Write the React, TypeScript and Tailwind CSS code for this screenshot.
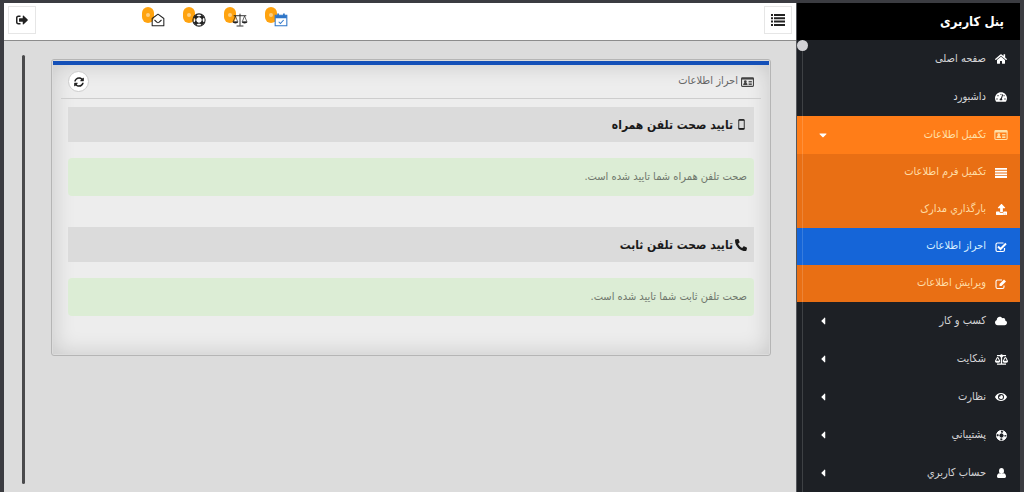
import type { ReactNode } from "react";
import {
  FaBalanceScale,
  FaCaretDown,
  FaCaretLeft,
  FaCloud,
  FaEye,
  FaHome,
  FaPhone,
  FaSignOutAlt,
  FaSyncAlt,
  FaTachometerAlt,
  FaUpload,
} from "react-icons/fa";

type IconProps = { className?: string };

function IdCardIcon({ className }: IconProps) {
  return (
    <svg viewBox="0 0 24 18" className={className} fill="none" stroke="currentColor" aria-hidden="true">
      <rect x="1" y="1" width="22" height="16" rx="1.5" strokeWidth="2" />
      <path d="M1 3h22" strokeWidth="3" />
      <path d="M14 8h6M14 11h6M14 13.5h6" strokeWidth="1.8" />
      <circle cx="8" cy="8.5" r="2.6" fill="currentColor" stroke="none" />
      <path d="M4 14.5c0-3 1.5-4 4-4s4 1 4 4z" fill="currentColor" stroke="none" />
    </svg>
  );
}

function LinesIcon({ className }: IconProps) {
  return (
    <svg viewBox="0 0 12 10" className={className} fill="currentColor" aria-hidden="true">
      <path d="M0 0h12v1.8H0zM0 2.7h12v1.8H0zM0 5.4h12v1.8H0zM0 8.1h12v1.8H0z" />
    </svg>
  );
}

function ListIcon({ className }: IconProps) {
  return (
    <svg viewBox="0 0 14 12" className={className} fill="currentColor" aria-hidden="true">
      <path d="M0 0h2v2H0zM0 3.3h2v2H0zM0 6.6h2v2H0zM0 10h2v2H0z" />
      <path d="M3 0h11v2H3zM3 3.3h11v2H3zM3 6.6h11v2H3zM3 10h11v2H3z" />
    </svg>
  );
}

function MobileIcon({ className }: IconProps) {
  return (
    <svg viewBox="0 0 12 20" className={className} fill="none" stroke="currentColor" aria-hidden="true">
      <rect x="1" y="1" width="10" height="18" rx="1" strokeWidth="1.6" />
      <path d="M1 2.2h10M1 17.5h10" strokeWidth="2.2" />
    </svg>
  );
}

function CheckBoxIcon({ className }: IconProps) {
  return (
    <svg viewBox="0 0 24 24" className={className} fill="none" stroke="currentColor" aria-hidden="true">
      <path d="M19 14v4a3 3 0 0 1-3 3H5a3 3 0 0 1-3-3V7a3 3 0 0 1 3-3h12" strokeWidth="2.4" />
      <path d="m6 11 5 5L22 5" strokeWidth="4" />
    </svg>
  );
}

function EditIcon({ className }: IconProps) {
  return (
    <svg viewBox="0 0 24 24" className={className} fill="none" stroke="currentColor" aria-hidden="true">
      <path d="M18 15v3a3 3 0 0 1-3 3H5a3 3 0 0 1-3-3V7a3 3 0 0 1 3-3h9" strokeWidth="2.2" />
      <path d="M9 12 18 3l4 4-9 9H9z" fill="currentColor" stroke="none" />
    </svg>
  );
}

function RingIcon({ className }: IconProps) {
  return (
    <svg viewBox="0 0 24 24" className={className} fill="none" stroke="currentColor" aria-hidden="true">
      <circle cx="12" cy="12" r="11" strokeWidth="1.8" />
      <circle cx="12" cy="12" r="5.5" strokeWidth="1.8" />
      <circle cx="12" cy="12" r="8.4" strokeWidth="6" strokeDasharray="8.6 4.6" strokeDashoffset="-2.3" />
    </svg>
  );
}

function UserIcon({ className }: IconProps) {
  return (
    <svg viewBox="0 0 20 22" className={className} fill="currentColor" aria-hidden="true">
      <ellipse cx="10" cy="6.5" rx="5.5" ry="6.5" />
      <path d="M5.5 11.5C2 12 0 15 0 19c0 2 1 3 3 3h14c2 0 3-1 3-3 0-4-2-7-5.500-7.500-2.500 2.500-6.500 2.500-9 0z" />
    </svg>
  );
}

function MailIcon({ className }: IconProps) {
  return (
    <svg viewBox="0 0 24 24" className={className} fill="none" stroke="currentColor" strokeWidth="1.8" strokeLinejoin="round" aria-hidden="true">
      <path d="M2 9.500 12 2l10 7.500V22H2z" />
      <path d="m6 12 4.500 4.200c1 .8 2 .8 3 0L18 12" />
    </svg>
  );
}

function SupportIcon({ className }: IconProps) {
  return (
    <svg viewBox="0 0 24 24" className={className} fill="none" stroke="currentColor" aria-hidden="true">
      <circle cx="12" cy="12" r="10.500" strokeWidth="1.8" />
      <circle cx="12" cy="12" r="5.500" strokeWidth="1.8" />
      <path d="m5 5 3.500 3.500M19 5l-3.500 3.500M5 19l3.500-3.500M19 19l-3.500-3.500" strokeWidth="6" />
    </svg>
  );
}

function ScalesIcon({ className }: IconProps) {
  return (
    <svg viewBox="0 0 28 24" className={className} fill="none" stroke="currentColor" strokeWidth="1.6" aria-hidden="true">
      <path d="M14 1v21M8 22.500h12M3 4.500h22" />
      <path d="M6 5 2 15h8zM22 5l-4 10h8z" strokeWidth="1.2" />
      <path d="M1 15h10c-.5 4-9.500 4-10 0zM17 15h10c-.5 4-9.500 4-10 0z" fill="currentColor" stroke="none" />
    </svg>
  );
}

function CalendarIcon({ className }: IconProps) {
  return (
    <svg viewBox="0 0 24 24" className={className} fill="none" stroke="currentColor" strokeWidth="1.8" aria-hidden="true">
      <path d="M2 4h20v18H2z" fill="white" />
      <path d="M2 6.500h20" strokeWidth="5" />
      <path d="M7 1v5M17 1v5" strokeWidth="3" />
      <path d="m8 15 3 3 5.500-6" />
    </svg>
  );
}

type MenuItem = {
  label: string;
  icon: ReactNode;
};

const topItems: MenuItem[] = [
  { label: "صفحه اصلی", icon: <FaHome className="size-3" /> },
  { label: "داشبورد", icon: <FaTachometerAlt className="size-3" /> },
];

const subItems: (MenuItem & { active?: boolean })[] = [
  { label: "تکمیل فرم اطلاعات", icon: <LinesIcon className="h-[10px] w-3" /> },
  { label: "بارگذاري مدارک", icon: <FaUpload className="size-[11px]" /> },
  { label: "احراز اطلاعات", icon: <CheckBoxIcon className="size-3" />, active: true },
  { label: "ویرایش اطلاعات", icon: <EditIcon className="size-3" /> },
];

const bottomItems: MenuItem[] = [
  { label: "کسب و کار", icon: <FaCloud className="size-3" /> },
  { label: "شکایت", icon: <FaBalanceScale className="size-[13px]" /> },
  { label: "نظارت", icon: <FaEye className="size-3" /> },
  { label: "پشتیباني", icon: <RingIcon className="size-[11px]" /> },
  { label: "حساب کاربري", icon: <UserIcon className="h-[10px] w-[9px]" /> },
];

const shortcuts = [
  { label: "تقویم", icon: <CalendarIcon className="size-[14px] text-[#2f76c8]" /> },
  { label: "شکایت", icon: <ScalesIcon className="h-[14px] w-4" /> },
  { label: "پشتیبانی", icon: <SupportIcon className="size-[14px]" /> },
  { label: "پیام ها", icon: <MailIcon className="size-[14px]" /> },
];

function MenuIcon({ children }: { children: ReactNode }) {
  return <span className="flex w-[14px] shrink-0 justify-center text-white">{children}</span>;
}

function Sidebar() {
  return (
    <aside className="relative w-56 shrink-0 border-l border-[#55575c] bg-[#1d2025]">
      <div className="flex h-[37px] items-center bg-black px-4">
        <h1 className="text-[13px] font-bold text-white">پنل کاربری</h1>
      </div>
      <nav>
        <ul>
          {topItems.map((item) => (
            <li key={item.label}>
              <a href="#" className="flex h-[38px] items-center gap-2 px-3 text-[11px] text-[#d6d6d8]">
                <MenuIcon>{item.icon}</MenuIcon>
                <span>{item.label}</span>
              </a>
            </li>
          ))}
          <li>
            <a href="#" className="flex h-[38px] items-center gap-2 bg-[#ff7d18] pr-3 pl-5 text-[11px] text-[#ffe0a8]">
              <IdCardIcon className="h-[10px] w-[14px] shrink-0" />
              <span className="flex-1">تکمیل اطلاعات</span>
              <FaCaretDown className="size-3 text-white" />
            </a>
            <ul className="bg-[#e96f14]">
              {subItems.map((item) => (
                <li key={item.label}>
                  <a
                    href="#"
                    className={
                      item.active
                        ? "flex h-[37px] items-center gap-2 bg-[#1565d8] px-3 text-[11px] text-[#d8f0ff]"
                        : "flex h-[37px] items-center gap-2 px-3 text-[11px] text-[#ffdda6]"
                    }
                  >
                    <MenuIcon>{item.icon}</MenuIcon>
                    <span>{item.label}</span>
                  </a>
                </li>
              ))}
            </ul>
          </li>
          {bottomItems.map((item) => (
            <li key={item.label}>
              <a href="#" className="flex h-[38px] items-center gap-2 pr-3 pl-5 text-[11px] text-[#d6d6d8]">
                <MenuIcon>{item.icon}</MenuIcon>
                <span className="flex-1">{item.label}</span>
                <FaCaretLeft className="size-3 text-white" />
              </a>
            </li>
          ))}
        </ul>
      </nav>
      {/* scroll rail over the menu */}
      <div className="absolute top-[37px] bottom-0 left-[5px] w-px bg-white/15" />
      <div className="absolute top-[37px] left-0 size-[11px] rounded-full bg-[#d2d2d6]" />
    </aside>
  );
}

function Topbar() {
  return (
    <header className="flex h-[38px] items-center border-b border-[#8c8c8c] bg-white px-1 pb-1 text-[#222]">
      <button type="button" aria-label="منو" className="flex size-7 items-center justify-center border border-[#e6e6e6]">
        <ListIcon className="h-3 w-[14px]" />
      </button>
      <div className="mr-auto flex gap-[25px]">
        {shortcuts.map((s) => (
          <button key={s.label} type="button" aria-label={s.label} className="relative w-4">
            <span className="absolute -top-[6px] -left-2 flex h-4 w-3 items-center justify-center rounded-full bg-[#ffa30f]">
              <span className="size-1 rounded-full bg-[#ffcf80]" />
            </span>
            <span className="relative flex justify-center">{s.icon}</span>
          </button>
        ))}
      </div>
      <button
        type="button"
        aria-label="خروج"
        className="mr-[114px] flex size-7 items-center justify-center border border-[#e6e6e6]"
      >
        <FaSignOutAlt className="size-3" />
      </button>
    </header>
  );
}

type SectionProps = {
  icon: ReactNode;
  title: string;
  message: string;
};

function Section({ icon, title, message }: SectionProps) {
  return (
    <section>
      <h2 className="flex h-[35px] items-center gap-[2px] bg-[#dbdbdb] px-[7px] text-xs font-bold text-[#1a1a1a]">
        <span className="flex w-3 justify-center">{icon}</span>
        {title}
      </h2>
      <p className="mt-4 flex h-[38px] items-center rounded-sm bg-[#dcedd5] px-[7px] text-[11px] text-[#6f776c]">{message}</p>
    </section>
  );
}

export default function App() {
  return (
    <div
      dir="rtl"
      className="flex min-h-screen border-x-4 border-t-[3px] border-[#3b3c41] bg-[#dcdcdc] font-['DejaVu_Sans_Condensed','DejaVu_Sans',sans-serif]"
    >
      <Sidebar />
      <div className="flex min-w-0 flex-1 flex-col">
        <Topbar />
        <main className="flex flex-1 items-start pt-[14px] pr-[25px] pb-2 pl-[18px]">
          <div className="mt-1 flex-1 rounded-[3px] border border-[#b5b5b5] p-px">
            <div className="border-t-4 border-[#1450b8] bg-[#ededed] px-2 pb-[38px] shadow-[inset_0_0_22px_rgba(0,0,0,0.16)]">
              <div className="flex h-[34px] items-center gap-[3px] border-b border-[#cdcdcd] px-[7px] text-[11px] text-[#666]">
                <IdCardIcon className="h-[10px] w-[13px] text-[#444]" />
                <span className="flex-1">احراز اطلاعات</span>
                <button
                  type="button"
                  aria-label="بارگذاری مجدد"
                  className="flex size-[21px] items-center justify-center rounded-full border border-[#ccc] bg-white text-[#222]"
                >
                  <FaSyncAlt className="size-[10px]" />
                </button>
              </div>
              <div className="mt-2 flex flex-col gap-[31px] px-[7px]">
                <Section
                  icon={<MobileIcon className="h-[11px] w-[7px]" />}
                  title="تایید صحت تلفن همراه"
                  message="صحت تلفن همراه شما تایید شده است."
                />
                <Section
                  icon={<FaPhone className="size-3 -scale-x-100" />}
                  title="تایید صحت تلفن ثابت"
                  message="صحت تلفن ثابت شما تایید شده است."
                />
              </div>
            </div>
          </div>
          <div className="mr-[26px] w-[3px] self-stretch rounded-full bg-[#4a4a4c]" />
        </main>
      </div>
    </div>
  );
}
